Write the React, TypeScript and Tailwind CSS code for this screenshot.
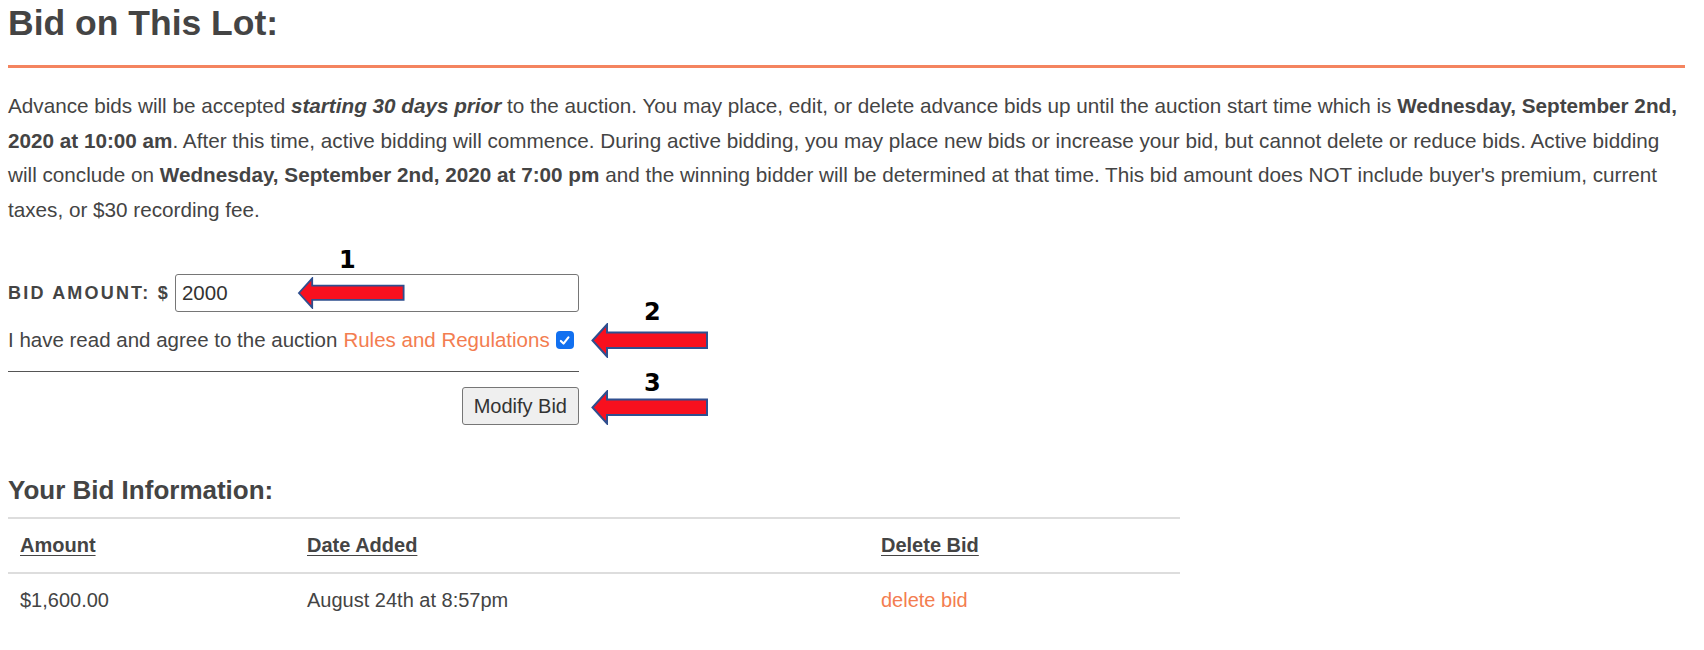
import React from 'react';

const FONT = { fontFamily: '"Liberation Sans", Arial, Helvetica, sans-serif' };

function Arrow({ className }: { className: string }) {
  return (
    <svg className={className} width="118" height="35" viewBox="0 0 118 35" fill="none">
      <path
        d="M1.5 17.5 L16 1.5 L16 9.5 L116 9.5 L116 25 L16 25 L16 33.5 Z"
        fill="#f8101e"
        stroke="#2f4f8f"
        strokeWidth="2"
        strokeLinejoin="miter"
      />
    </svg>
  );
}

function Marker({ n, className }: { n: string; className: string }) {
  return (
    <span
      className={`absolute text-[24px] font-bold leading-none text-black ${className}`}
      style={{ fontFamily: '"DejaVu Sans", "Noto Sans", sans-serif' }}
    >
      {n}
    </span>
  );
}

export default function App() {
  return (
    <div className="relative min-h-[650px] bg-white pl-2 pr-[19px] text-[#444]" style={FONT}>
      <h2 className="border-b-[3px] border-[#f4845f] pb-[21px] pt-0.5 text-[35.5px] font-bold leading-[42px] text-[#444]">
        Bid on This Lot:
      </h2>

      <p className="mt-[21px] text-[20.7px] leading-[34.5px]">
        Advance bids will be accepted <b><i>starting 30 days prior</i></b> to the auction. You may place, edit, or
        delete advance bids up until the auction start time which is <b>Wednesday, September 2nd, 2020 at 10:00 am</b>.
        After this time, active bidding will commence. During active bidding, you may place new bids or increase your
        bid, but cannot delete or reduce bids. Active bidding will conclude on{' '}
        <b>Wednesday, September 2nd, 2020 at 7:00 pm</b> and the winning bidder will be determined at that time. This
        bid amount does NOT include buyer's premium, current taxes, or $30 recording fee.
      </p>

      <div className="mt-[47px] w-[571px]">
        <div className="flex items-center">
          <label className="text-[18px] font-bold tracking-[2.2px] text-[#444]">BID AMOUNT: $</label>
          <input
            type="text"
            defaultValue="2000"
            className="ml-[5px] h-[38px] w-[404px] rounded-[3px] border border-[#767676] px-[6px] text-[20.5px] text-[#333] outline-none"
            style={FONT}
          />
        </div>

        <div className="mt-[13px] flex items-center text-[20.5px] leading-[30px]">
          <span>I have read and agree to the auction</span>
          <a href="#" className="ml-[6px] text-[#f37d50]">Rules and Regulations</a>
          <span className="ml-[6px] flex h-[18px] w-[18px] items-center justify-center rounded-[4px] bg-[#1170f0]">
            <svg width="13" height="13" viewBox="0 0 16 16" fill="none" stroke="white" strokeWidth="2.6" strokeLinecap="round" strokeLinejoin="round">
              <path d="M3.5 8.5 L6.8 11.8 L12.8 4.2" />
            </svg>
          </span>
        </div>

        <div className="mt-4 h-px bg-[#555]" />

        <div className="mt-[15px] flex justify-end">
          <button
            className="h-[38px] rounded-[3px] border border-[#767676] bg-[#efefef] px-[11px] text-[20px] text-[#333]"
            style={FONT}
          >
            Modify Bid
          </button>
        </div>
      </div>

      <h3 className="mt-[50px] text-[26px] font-bold leading-[31px] text-[#444]">Your Bid Information:</h3>

      <table className="mt-[11px] w-[1172px] border-collapse text-left text-[20px] leading-[30px]">
        <thead>
          <tr className="border-t-2 border-[#ddd]">
            <th className="w-[287px] px-3 pb-3 pt-[11px] font-bold underline decoration-1 underline-offset-[3px]">Amount</th>
            <th className="w-[574px] px-3 pb-3 pt-[11px] font-bold underline decoration-1 underline-offset-[3px]">Date Added</th>
            <th className="px-3 pb-3 pt-[11px] font-bold underline decoration-1 underline-offset-[3px]">Delete Bid</th>
          </tr>
        </thead>
        <tbody>
          <tr className="border-t-2 border-[#ddd]">
            <td className="px-3 pb-3 pt-[11px]">$1,600.00</td>
            <td className="px-3 pb-3 pt-[11px]">August 24th at 8:57pm</td>
            <td className="px-3 pb-3 pt-[11px]">
              <a href="#" className="text-[#f37d50]">delete bid</a>
            </td>
          </tr>
        </tbody>
      </table>

      {/* annotation overlay */}
      <Marker n="1" className="left-[339px] top-[248px]" />
      <Marker n="2" className="left-[644px] top-[300px]" />
      <Marker n="3" className="left-[644px] top-[371px]" />
      <Arrow className="absolute left-[293px] top-[277px] h-[32px] w-[117px]" />
      <Arrow className="absolute left-[591px] top-[323px]" />
      <Arrow className="absolute left-[591px] top-[390px]" />
    </div>
  );
}
